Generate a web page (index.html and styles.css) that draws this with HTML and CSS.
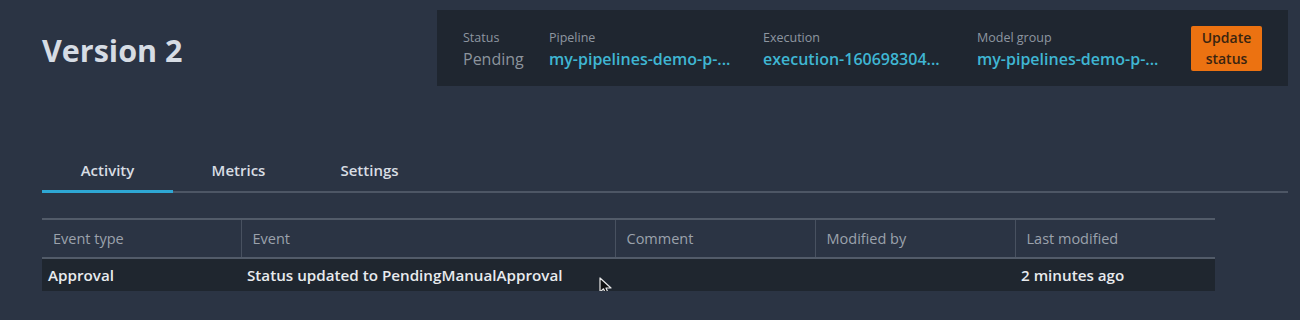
FILE: index.html
```html
<!DOCTYPE html>
<html>
<head>
    <meta charset="UTF-8">
    <title>Version 2</title>
    <link rel="stylesheet" href="styles.css">
</head>
<body>
    <div class="page">
        <div class="header">
            <h1>Version 2</h1>
            <div class="summary">
                <div class="field f-status">
                    <div class="label">Status</div>
                    <div class="value muted">Pending</div>
                </div>
                <div class="field">
                    <div class="label">Pipeline</div>
                    <div class="value link">my-pipelines-demo-p-...</div>
                </div>
                <div class="field">
                    <div class="label">Execution</div>
                    <div class="value link">execution-160698304...</div>
                </div>
                <div class="field">
                    <div class="label">Model group</div>
                    <div class="value link">my-pipelines-demo-p-...</div>
                </div>
                <button class="btn-primary">Update<br>status</button>
            </div>
        </div>

        <div class="tabs">
            <div class="tab active">Activity</div>
            <div class="tab">Metrics</div>
            <div class="tab">Settings</div>
        </div>

        <div class="table-wrap">
            <table class="activity">
                <colgroup>
                    <col style="width: 199px">
                    <col style="width: 374px">
                    <col style="width: 200px">
                    <col style="width: 200px">
                    <col style="width: 200px">
                </colgroup>
                <thead>
                    <tr>
                        <th>Event type</th>
                        <th>Event</th>
                        <th>Comment</th>
                        <th>Modified by</th>
                        <th>Last modified</th>
                    </tr>
                </thead>
                <tbody>
                    <tr>
                        <td>Approval</td>
                        <td>Status updated to PendingManualApproval</td>
                        <td></td>
                        <td></td>
                        <td>2 minutes ago</td>
                    </tr>
                </tbody>
            </table>
            <!-- mouse pointer over the row -->
            <svg class="cursor" width="14" height="20" viewBox="0 0 14 20">
                <path d="M1 1 L1 15 L4.5 11.8 L7 17.5 L9.4 16.4 L7 11 L12 11 Z" fill="#111" stroke="#e8e8e8" stroke-width="1.2" stroke-linejoin="round"/>
            </svg>
        </div>
    </div>
</body>
</html>
```

FILE: styles.css
```css
body {
    margin: 0;
    background: #2b3444;
    font-family: "Open Sans", "Noto Sans", sans-serif;
    color: #e6e9ed;
}
.page {
    padding: 10px 12px 0 42px;
}
.header {
    display: flex;
    justify-content: space-between;
    align-items: flex-start;
}
h1 {
    margin: 19px 0 0 0;
    font-size: 30.5px;
    font-weight: 700;
    color: #d6dce4;
    line-height: 42px;
}
.summary {
    display: flex;
    align-items: center;
    width: 851px;
    height: 76px;
    box-sizing: border-box;
    padding: 2px 26px 0;
    background: #1f2630;
}
.field {
    width: 214px;
    flex-shrink: 0;
}
.field.f-status {
    width: 86px;
}
.label {
    font-size: 12.5px;
    color: #8e96a0;
    line-height: 19px;
}
.value {
    font-size: 16px;
    font-weight: 600;
    line-height: 24px;
    white-space: nowrap;
}
.value.muted {
    color: #8c949d;
    font-weight: 500;
}
.value.link {
    color: #3fb6d3;
}
.btn-primary {
    margin: -2px 0 0 auto;
    width: 73px;
    height: 45px;
    padding: 0;
    border: none;
    border-radius: 2px;
    background: #ec7211;
    color: #3a2410;
    font-family: inherit;
    font-size: 14px;
    font-weight: 600;
    line-height: 21px;
}
.tabs {
    display: flex;
    margin-top: 65px;
    border-bottom: 2px solid #4d5665;
}
.tab {
    width: 131px;
    text-align: center;
    font-size: 15px;
    font-weight: 600;
    color: #d8dde3;
    padding: 9px 0 10px;
    margin-bottom: -2px;
    border-bottom: 3px solid transparent;
}
.tab.active {
    border-bottom-color: #2ea7d4;
}
.table-wrap {
    position: relative;
    margin-top: 25px;
}
.activity {
    width: 1173px;
    border-collapse: collapse;
    table-layout: fixed;
}
.activity th {
    text-align: left;
    font-size: 14.5px;
    font-weight: 400;
    color: #9ba2ac;
    height: 37px;
    padding: 0 11px;
    border-top: 2px solid #525b69;
    border-bottom: 2px solid #525b69;
    border-left: 1px solid #485160;
}
.activity th:first-child {
    border-left: none;
}
.activity td {
    background: #1f262f;
    height: 32px;
    padding: 0 6px;
    font-size: 15.2px;
    font-weight: 600;
    color: #e8ebee;
    white-space: nowrap;
}
.cursor {
    position: absolute;
    left: 557px;
    top: 59px;
}
```
